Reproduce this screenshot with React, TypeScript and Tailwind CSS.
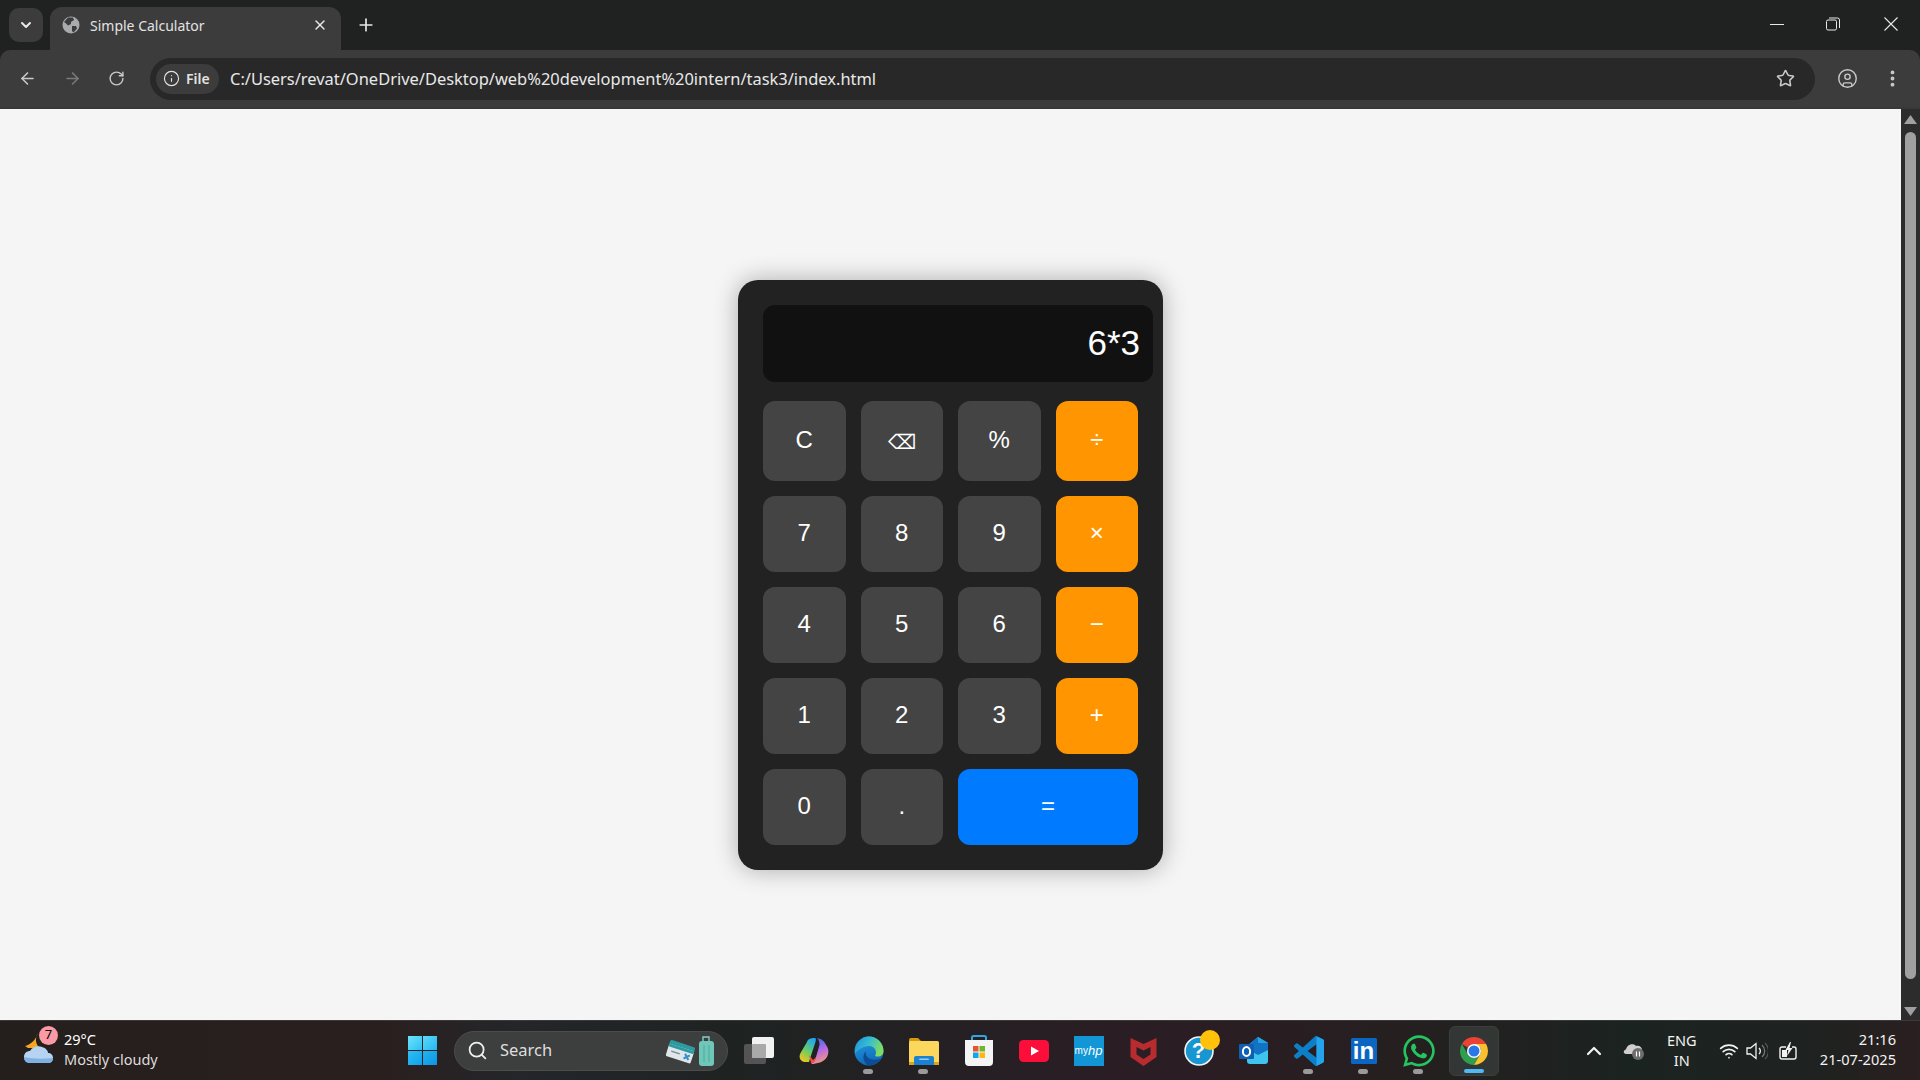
import React from "react";
import { ArrowLeft, ArrowRight, RotateCw, Star, CircleUser, EllipsisVertical, Info, Plus, X, ChevronDown, ChevronUp, Search, Wifi } from "lucide-react";
import { FaWhatsapp } from "react-icons/fa";

const ui = "font-['Noto_Sans','Open_Sans',sans-serif]";

function Globe() {
  return (
    <svg width="18" height="18" viewBox="0 0 18 18">
      <circle cx="9" cy="9" r="8.5" fill="#a9abac" />
      <path d="M6 1.5 L11 1.6 L12 4 L9 6 L9 8 L6 9.5 L3.5 7 L2 6 Z" fill="#3c3c3c" />
      <path d="M10 10 L14 10 L15 12.5 L11.5 16.5 L10 15 Z" fill="#3c3c3c" />
    </svg>
  );
}

function Restore() {
  return (
    <svg width="14" height="14" viewBox="0 0 14 14" fill="none" stroke="#e8e8e8" strokeWidth="1">
      <rect x="0.5" y="3" width="10" height="10" rx="1.5" />
      <path d="M3 1 H11.5 A2 2 0 0 1 13.5 3 V11" />
    </svg>
  );
}

function CloseWin() {
  return (
    <svg width="14" height="14" viewBox="0 0 14 14" stroke="#e8e8e8" strokeWidth="1.1">
      <path d="M0.5 0.5 L13.5 13.5 M13.5 0.5 L0.5 13.5" />
    </svg>
  );
}

function Weather() {
  return (
    <svg width="34" height="36" viewBox="0 0 34 36" className="mb-[4px]">
      <path d="M14 2 C11 7 11 13 16 17 L4 17 L1 15 C6 14 12 9 14 2 Z" fill="#f5a623" />
      <path d="M6 32 C1 32 0 28 0 26 C0 22 3 20 6 20 C8 16 14 14 18 16 C22 17 24 20 24 22 C27 22 29 24 29 27 C29 30 27 32 24 32 Z" fill="#b6d4f2" />
      <path d="M6 32 C1 32 0 28 0 26 C8 28 20 28 29 27 C29 30 27 32 24 32 Z" fill="#7fb0e4" />
    </svg>
  );
}

function WinLogo() {
  return (
    <div className="grid grid-cols-2 gap-[1px] w-[29px] h-[29px] shrink-0">
      <div className="bg-[linear-gradient(135deg,#6fe3fb,#2cc1f3)]" />
      <div className="bg-[linear-gradient(135deg,#5bdcfa,#25b6ef)]" />
      <div className="bg-[linear-gradient(135deg,#2cc0f4,#11a0ea)]" />
      <div className="bg-[linear-gradient(135deg,#22b4f0,#0d94e3)]" />
    </div>
  );
}

function Luggage() {
  return (
    <svg width="52" height="30" viewBox="0 0 52 30">
      <g transform="rotate(18 14 14)">
        <rect x="2" y="7" width="26" height="13" rx="1.5" fill="#2d9aa0" />
        <rect x="2" y="11" width="26" height="13" rx="1.5" fill="#dfe7ea" />
        <rect x="2" y="11" width="26" height="3" fill="#2d9aa0" />
        <rect x="6" y="17" width="9" height="1.5" fill="#7d8a90" />
        <path d="M20 16 L25 21 M25 16 L20 21" stroke="#3a8ec9" strokeWidth="2" />
      </g>
      <path d="M37 5 V1 H43 V5" fill="none" stroke="#7fd1c7" strokeWidth="1.4" />
      <rect x="33" y="5" width="15" height="25" rx="3" fill="#6fc7ba" />
      <path d="M38 9 V26 M43 9 V26" stroke="#4faa9e" strokeWidth="1" />
    </svg>
  );
}

function TaskView() {
  return (
    <svg width="32" height="30" viewBox="0 0 32 30">
      <rect x="1" y="8" width="22" height="20" rx="2" fill="#545454" />
      <rect x="9" y="1" width="22" height="21" rx="2" fill="#f2f2f2" />
      <rect x="9" y="8" width="14" height="14" rx="1" fill="#a9a9a9" />
    </svg>
  );
}

function Copilot() {
  return (
    <svg width="30" height="28" viewBox="0 0 30 28">
      <defs>
        <linearGradient id="cpA" x1="0.7" y1="0" x2="0.2" y2="1">
          <stop offset="0" stopColor="#1fa8ee" />
          <stop offset="0.55" stopColor="#6fcf5f" />
          <stop offset="1" stopColor="#f7c51c" />
        </linearGradient>
        <linearGradient id="cpB" x1="0.3" y1="0" x2="0.6" y2="1">
          <stop offset="0" stopColor="#2f6fe8" />
          <stop offset="0.5" stopColor="#b66ae6" />
          <stop offset="1" stopColor="#f79a78" />
        </linearGradient>
      </defs>
      <path d="M16 1 C11 1 9 2 8 5 L1.5 16 C-1 21 2 25 7 25 L10 25 L12.5 17 L16.5 5 C17 3 17 1 16 1 Z" fill="url(#cpA)" />
      <path d="M18 1 C23 2 25 4 27 8 C30 12 30 16 28 20 C25 25 18 27 12 27 C15 25 16 23 17 20 L20.5 8 C20.5 5 20 3 18 1 Z" fill="url(#cpB)" />
      <path d="M10 18 L12 26 C14 27 16 25 17 20 L14 23 Z" fill="#ef4d45" />
    </svg>
  );
}

function Edge() {
  return (
    <svg width="30" height="30" viewBox="0 0 30 30">
      <defs>
        <linearGradient id="edA" x1="0" y1="0" x2="1" y2="0.4">
          <stop offset="0" stopColor="#1d8ed6" />
          <stop offset="0.5" stopColor="#32bcd3" />
          <stop offset="1" stopColor="#7fdb62" />
        </linearGradient>
        <linearGradient id="edB" x1="0" y1="0" x2="0.3" y2="1">
          <stop offset="0" stopColor="#29a0e6" />
          <stop offset="1" stopColor="#0f6ab8" />
        </linearGradient>
      </defs>
      <circle cx="15" cy="15" r="14.5" fill="url(#edB)" />
      <path d="M15 0.5 C23 0.5 29.5 7 29.5 15 C29.5 20 25 21.5 21 20 C24 15 20 9 14 10 C8 11 3 14 1 18 C0 8 7 0.5 15 0.5 Z" fill="url(#edA)" />
      <path d="M12 15 C10 21 17 26 27 22.5 C24 27 19 29.5 15 29.5 C10 28 7 20 12 15 Z" fill="#0c4c94" />
    </svg>
  );
}

function Folder() {
  return (
    <svg width="30" height="28" viewBox="0 0 30 28">
      <path d="M0 3 A2 2 0 0 1 2 1 H9 L13 5 H0 Z" fill="#d69a0c" />
      <rect x="0" y="4" width="30" height="24" rx="1.5" fill="#fcd75e" />
      <rect x="0" y="25" width="30" height="3" fill="#d9a521" />
      <path d="M5 21 Q5 19 7 19 H23 Q25 19 25 21 V28 H5 Z" fill="#1c82d0" />
      <rect x="10" y="21.5" width="10" height="1.6" rx="0.8" fill="#8dd0f5" />
    </svg>
  );
}

function Store() {
  return (
    <svg width="30" height="32" viewBox="0 0 30 32">
      <path d="M8 7 V2.5 A1.5 1.5 0 0 1 9.5 1 H20.5 A1.5 1.5 0 0 1 22 2.5 V7" fill="none" stroke="#2ca7e0" strokeWidth="2" />
      <path d="M1 5 H29 V27 A4 4 0 0 1 25 31 H5 A4 4 0 0 1 1 27 Z" fill="#f4f4f4" />
      <rect x="9" y="11" width="5.5" height="5.5" fill="#e8552a" />
      <rect x="15.5" y="11" width="5.5" height="5.5" fill="#70b62c" />
      <rect x="9" y="17.5" width="5.5" height="5.5" fill="#12a5ea" />
      <rect x="15.5" y="17.5" width="5.5" height="5.5" fill="#fdb813" />
    </svg>
  );
}

function YouTube() {
  return (
    <svg width="30" height="22" viewBox="0 0 30 22">
      <rect x="0" y="0" width="30" height="22" rx="4.5" fill="#fb0f3a" />
      <path d="M12 6.5 L20 11 L12 15.5 Z" fill="#fff" />
    </svg>
  );
}

function MyHp() {
  return (
    <div className="w-[30px] h-[30px] bg-[#1296d6] flex items-center justify-center text-white leading-none font-['Liberation_Sans',sans-serif]">
      <span className="text-[10px]">my</span>
      <span className="text-[13px] italic">hp</span>
    </div>
  );
}

function McAfee() {
  return (
    <svg width="27" height="30" viewBox="0 0 26 30">
      <path d="M0 2 L13 8 L26 2 V21 L13 30 L0 21 Z M6 11 V18.5 L13 23 L20 18.5 V11 L13 14.5 Z" fill="#b82b2f" fillRule="evenodd" />
    </svg>
  );
}

function Help() {
  return (
    <div className="relative w-[30px] h-[30px]">
      <svg width="30" height="30" viewBox="0 0 30 30">
        <circle cx="15" cy="15" r="14" fill="#1796d2" stroke="#f4f4f4" strokeWidth="1.6" />
      </svg>
      <span className="absolute inset-0 flex items-center justify-center text-white text-[22px] font-bold font-['Liberation_Sans',sans-serif]">?</span>
      <span className="absolute left-[16px] top-[-6px] w-[20px] h-[20px] rounded-full bg-[#ffc10a]" />
    </div>
  );
}

function Outlook() {
  return (
    <svg width="30" height="28" viewBox="0 0 30 28">
      <path d="M8 9 L19 0 L29 6 V24 A3 3 0 0 1 26 27 H11 A3 3 0 0 1 8 24 Z" fill="#3fc4ee" />
      <path d="M19 0 L29 6 V13 L19 18 L8 12 V9 Z" fill="#1173c4" />
      <path d="M19 0 L29 6 H19 Z" fill="#27a3dd" />
      <rect x="0" y="7" width="15" height="15" rx="1" fill="#0f5fb5" />
      <ellipse cx="7.5" cy="14.5" rx="3.6" ry="4.6" fill="none" stroke="#fff" strokeWidth="2" />
    </svg>
  );
}

function VsCode() {
  return (
    <svg width="30" height="30" viewBox="0 0 24 24">
      <path d="M23.15 2.587L18.21.21a1.494 1.494 0 0 0-1.705.29l-9.46 8.63-4.12-3.128a.999.999 0 0 0-1.276.057L.327 7.261A1 1 0 0 0 .326 8.74L3.899 12 .326 15.26a1 1 0 0 0 .001 1.479L1.65 17.94a.999.999 0 0 0 1.276.057l4.12-3.128 9.46 8.63a1.492 1.492 0 0 0 1.704.29l4.942-2.377A1.5 1.5 0 0 0 24 20.06V3.939a1.5 1.5 0 0 0-.85-1.352zm-5.146 14.861L10.826 12l7.178-5.448v10.896z" fill="#0d7fc8" />
      <path d="M18 0.1 L23.15 2.587 A1.5 1.5 0 0 1 24 3.939 V20.06 A1.5 1.5 0 0 1 23.15 21.41 L18 23.9 Z" fill="#24a4ec" />
    </svg>
  );
}

function LinkedIn() {
  return (
    <div className="w-[26px] h-[26px] rounded-[1.5px] bg-[#0a66c2] flex items-center justify-center pt-[1px] text-white text-[24px] leading-none font-bold font-['Liberation_Sans',sans-serif]">in</div>
  );
}

function Chrome() {
  return (
    <svg width="30" height="30" viewBox="0 0 30 30">
      <path d="M15 1a14 14 0 0 1 12.12 7H15a7 7 0 0 0-6.06 3.5L2.88 8A14 14 0 0 1 15 1z" fill="#ea4335" />
      <path d="M2.88 8A14 14 0 0 0 15 29l6.06-10.5a7 7 0 0 1-12.12 0z" fill="#2f9e4f" />
      <path d="M27.12 8A14 14 0 0 1 15 29l6.06-10.5a7 7 0 0 0 0-7L15 8z" fill="#fbc02d" />
      <circle cx="15" cy="15" r="7" fill="#fff" />
      <circle cx="15" cy="15" r="5.5" fill="#2a77e8" />
    </svg>
  );
}

function OneDrivePause() {
  return (
    <svg width="22" height="20" viewBox="0 0 22 20">
      <path d="M3 13 C0 13 0 9 3 8.5 C4 3 11 2 13 5 C16 4 19 6 19 9 V13 Z" fill="#cfcfcf" />
      <circle cx="15" cy="13" r="6" fill="#6d6d6d" />
      <path d="M13.5 10.5 V15.5 M16.5 10.5 V15.5" stroke="#fff" strokeWidth="1.2" />
    </svg>
  );
}

function Volume() {
  return (
    <svg width="22" height="20" viewBox="0 0 22 20" fill="none">
      <path d="M1 7 H4.5 L10 2.5 V17.5 L4.5 13 H1 Z" stroke="#f2f2f2" strokeWidth="1.3" />
      <path d="M13 7 A4 4 0 0 1 13 13" stroke="#f2f2f2" strokeWidth="1.3" />
      <path d="M16 4 A8 8 0 0 1 16 16" stroke="#777" strokeWidth="1.3" />
      <path d="M19 2 A11 11 0 0 1 19 18" stroke="#555" strokeWidth="1.3" />
    </svg>
  );
}

function Battery() {
  return (
    <svg width="20" height="18" viewBox="0 0 20 18" fill="none">
      <path d="M7 5 H3 A2 2 0 0 0 1 7 V15 A2 2 0 0 0 3 17 H15 A2 2 0 0 0 17 15 V7 A2 2 0 0 0 15 5 H13" stroke="#f2f2f2" strokeWidth="1.4" />
      <path d="M3 8 H8 V15 H3 Z" fill="#f2f2f2" />
      <path d="M11 0 L6.5 8 H9.5 L8 14 L13.5 6 H10.5 L12 0 Z" fill="#f2f2f2" />
    </svg>
  );
}

function CalcButton({ label, kind = "num" }: { label: string; kind?: "num" | "op" | "eq" }) {
  const colour = kind === "op" ? "bg-[#ff9500]" : kind === "eq" ? "bg-[#007bff] col-span-2" : "bg-[#444444]";
  const size = label === "⌫" ? "text-[20px] pt-[2px]" : "text-[24px] pb-[3px]";
  return <button className={`${colour} ${size} rounded-[12px] text-white font-['Liberation_Sans',sans-serif]`}>{label}</button>;
}

const rows: { label: string; kind?: "num" | "op" | "eq" }[] = [
  { label: "C" }, { label: "⌫" }, { label: "%" }, { label: "÷", kind: "op" },
  { label: "7" }, { label: "8" }, { label: "9" }, { label: "×", kind: "op" },
  { label: "4" }, { label: "5" }, { label: "6" }, { label: "−", kind: "op" },
  { label: "1" }, { label: "2" }, { label: "3" }, { label: "+", kind: "op" },
  { label: "0" }, { label: "." }, { label: "=", kind: "eq" },
];

const dock: { icon: React.ReactNode; dot?: boolean }[] = [
  { icon: <TaskView /> },
  { icon: <Copilot /> },
  { icon: <Edge />, dot: true },
  { icon: <Folder />, dot: true },
  { icon: <Store /> },
  { icon: <YouTube /> },
  { icon: <MyHp /> },
  { icon: <McAfee /> },
  { icon: <Help /> },
  { icon: <Outlook /> },
  { icon: <VsCode />, dot: true },
  { icon: <LinkedIn />, dot: true },
  { icon: <FaWhatsapp size={36} color="#25c45f" />, dot: true },
];

export default function App() {
  return (
    <div className={`w-[1920px] h-[1080px] flex flex-col overflow-hidden ${ui}`}>
      {/* title bar */}
      <div className="h-[50px] shrink-0 bg-[#202221] flex items-end pl-[9px] text-[#e3e3e3]">
        <div className="w-[34px] h-[34px] mb-[8px] rounded-[10px] bg-[#3c3c3c] flex items-center justify-center">
          <ChevronDown size={16} strokeWidth={3} color="#e8e8e8" />
        </div>
        <div className="ml-[7px] w-[291px] h-[43px] rounded-t-[12px] bg-[#3c3c3c] flex items-center pl-[12px] pr-[13px] pb-[7px]">
          <Globe />
          <span className="ml-[10px] text-[14px] flex-1">Simple Calculator</span>
          <X size={16} strokeWidth={2.2} color="#e8e8e8" />
        </div>
        <div className="ml-[15px] mb-[15px] flex items-center">
          <Plus size={20} strokeWidth={2} color="#e8e8e8" />
        </div>
        <div className="flex-1" />
        <div className="self-stretch flex items-center pb-[2px]">
          <div className="w-[14px] h-[1px] bg-[#e8e8e8] mr-[42px]" />
          <div className="mr-[44px]"><Restore /></div>
          <div className="mr-[22px]"><CloseWin /></div>
        </div>
      </div>

      {/* toolbar */}
      <div className="h-[59px] shrink-0 bg-[#202221]">
        <div className="h-full bg-[#3c3c3c] rounded-t-[10px] flex items-center border-b-[2px] border-[#383838]">
          <div className="w-[150px] flex items-center pl-[18px] gap-[26px]">
            <ArrowLeft size={19} color="#c9c9c9" strokeWidth={2} />
            <ArrowRight size={19} color="#7a7a7a" strokeWidth={2} />
            <RotateCw size={17} color="#c9c9c9" strokeWidth={2} />
          </div>
          <div className="w-[1665px] h-[42px] rounded-full bg-[#282828] flex items-center pl-[6px] pr-[20px]">
            <div className="w-[63px] h-[30px] rounded-full bg-[#3c3c3c] flex items-center pl-[7px] gap-[6px] shrink-0">
              <Info size={17} color="#e3e3e3" strokeWidth={1.6} />
              <span className="text-[14px] font-semibold text-[#e3e3e3]">File</span>
            </div>
            <span className="ml-[11px] pt-[2px] text-[16.45px] text-[#e8e8e8] flex-1 whitespace-nowrap">C:/Users/revat/OneDrive/Desktop/web%20development%20intern/task3/index.html</span>
            <Star size={19} color="#c9c9c9" strokeWidth={2} />
          </div>
          <div className="ml-[22px]"><CircleUser size={21} color="#c9c9c9" strokeWidth={1.6} /></div>
          <div className="ml-[24px]"><EllipsisVertical size={21} color="#c9c9c9" strokeWidth={2.4} /></div>
        </div>
      </div>

      {/* page and scrollbar */}
      <div className="flex-1 flex min-h-0">
        <div className="flex-1 bg-[#f5f5f5] flex justify-center pt-[171px]">
          <div className="w-[425px] h-[590px] rounded-[20px] bg-[#222222] p-[25px] shadow-[0_0_25px_rgba(0,0,0,0.3)]">
            <div className="w-[390px] h-[77px] rounded-[12px] bg-[#111111] mb-[19px] flex items-center justify-end pr-[13px] text-white text-[35px] font-['Liberation_Sans',sans-serif]">6*3</div>
            <div className="grid grid-cols-4 gap-[15px] grid-rows-[80px_76px_76px_76px_76px]">
              {rows.map((r) => (
                <CalcButton key={r.label} label={r.label} kind={r.kind} />
              ))}
            </div>
          </div>
        </div>
        <div className="w-[19px] bg-[#2c2c2c] flex flex-col items-center pt-[6px] pb-[4px] shrink-0">
          <svg width="13" height="9" viewBox="0 0 13 9"><path d="M6.5 0 L13 9 H0 Z" fill="#a0a0a0" /></svg>
          <div className="w-[11px] mt-[8px] h-[847px] rounded-full bg-[#a0a0a0]" />
          <div className="flex-1" />
          <svg width="13" height="9" viewBox="0 0 13 9"><path d="M0 0 H13 L6.5 9 Z" fill="#a0a0a0" /></svg>
        </div>
      </div>

      {/* taskbar */}
      <div className="h-[60px] shrink-0 border-t border-[#3a3a3a] flex items-center text-white bg-[linear-gradient(90deg,#241f1d_0%,#2a1f1f_20%,#24262a_27%,#1e2322_38%,#2b1d24_60%,#261f20_72%,#1b2320_85%,#1f2220_95%,#2b1f20_100%)]">
        <div className="w-[408px] shrink-0 flex items-center pl-[24px] relative">
          <Weather />
          <span className="absolute left-[39px] top-[-3px] w-[19px] h-[19px] rounded-full bg-[#f99aa5] flex items-center justify-center text-[13px] text-black">7</span>
          <div className="ml-[6px] mb-[4px] flex flex-col leading-[20px]">
            <span className="text-[14.5px]">29°C</span>
            <span className="text-[14.5px] text-[#dcdcdc]">Mostly cloudy</span>
          </div>
        </div>
        <WinLogo />
        <div className="ml-[17px] w-[274px] h-[40px] rounded-full bg-[#3d3f3e] border border-[#4c4c4c] flex items-center pl-[12px] pr-[9px] shrink-0">
          <Search size={21} color="#f0f0f0" strokeWidth={2} />
          <span className="ml-[12px] text-[16.5px] text-[#dedede] flex-1">Search</span>
          <Luggage />
        </div>
        <div className="ml-[3px] flex items-center">
          {dock.map((d, i) => (
            <div key={i} className="relative w-[55px] h-[50px] flex items-center justify-center shrink-0">
              {d.icon}
              {d.dot && <span className="absolute bottom-[2px] left-[22px] w-[10px] h-[5px] rounded-full bg-[#9a9a9a]" />}
            </div>
          ))}
          <div className="relative w-[50px] h-[50px] ml-[3px] rounded-[6px] bg-[#323634] border border-[#3a3e3c] flex items-center justify-center shrink-0">
            <Chrome />
            <span className="absolute bottom-[2px] left-[14px] w-[20px] h-[4px] rounded-full bg-[#4fb8f5]" />
          </div>
        </div>
        <div className="flex-1" />
        <div className="flex items-center pr-[24px] text-[#f2f2f2]">
          <ChevronUp size={24} strokeWidth={2.2} color="#f2f2f2" />
          <div className="ml-[17px]"><OneDrivePause /></div>
          <div className="ml-[10px] mb-[2px] w-[54px] flex flex-col items-center text-[14.5px] leading-[20px]">
            <span>ENG</span>
            <span>IN</span>
          </div>
          <div className="ml-[10px]"><Wifi size={20} strokeWidth={2} color="#f2f2f2" /></div>
          <div className="ml-[7px]"><Volume /></div>
          <div className="ml-[11px]"><Battery /></div>
          <div className="ml-[21px] mb-[4px] flex flex-col items-end text-[14.6px] leading-[20px]">
            <span>21:16</span>
            <span>21-07-2025</span>
          </div>
        </div>
      </div>
    </div>
  );
}
